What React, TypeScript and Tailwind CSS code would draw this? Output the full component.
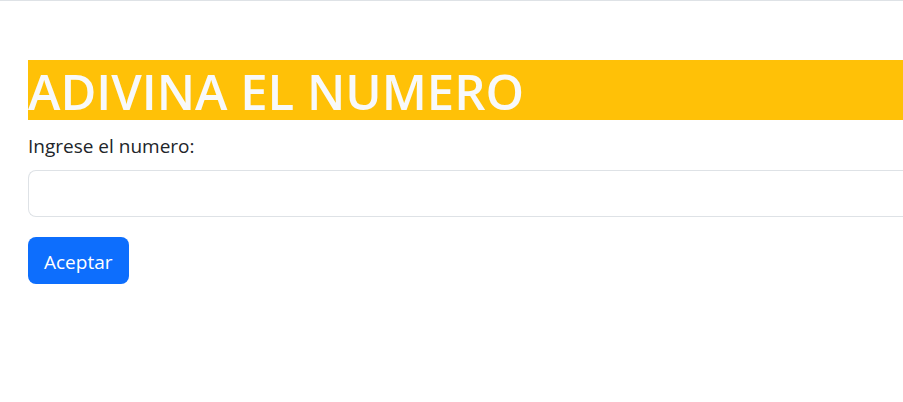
import React from "react";

export default function App() {
  return (
    <main className="min-h-screen overflow-x-hidden border-t border-[#dee2e6] bg-white pl-7 pt-[59px] font-['Open_Sans','Noto_Sans',sans-serif] text-[#212529]">
      <h1 className="mb-2.5 bg-[#ffc107] pt-0.5 text-[49px] font-semibold leading-[58px] text-[#f8f9fa]">
        ADIVINA EL NUMERO
      </h1>
      <form onSubmit={(event) => event.preventDefault()}>
        <label htmlFor="numero" className="mb-2.5 block pt-0.5 text-[19px] leading-7">
          Ingrese el numero:
        </label>
        <input
          id="numero"
          type="text"
          className="mb-5 block h-[47px] w-full rounded-l-lg border border-r-0 border-[#dee2e6] bg-white px-4 text-[19px]"
        />
        <button
          type="submit"
          className="block h-[47px] rounded-lg bg-[#0d6efd] px-4 pt-0.5 text-[19px] leading-7 text-white"
        >
          Aceptar
        </button>
      </form>
    </main>
  );
}
